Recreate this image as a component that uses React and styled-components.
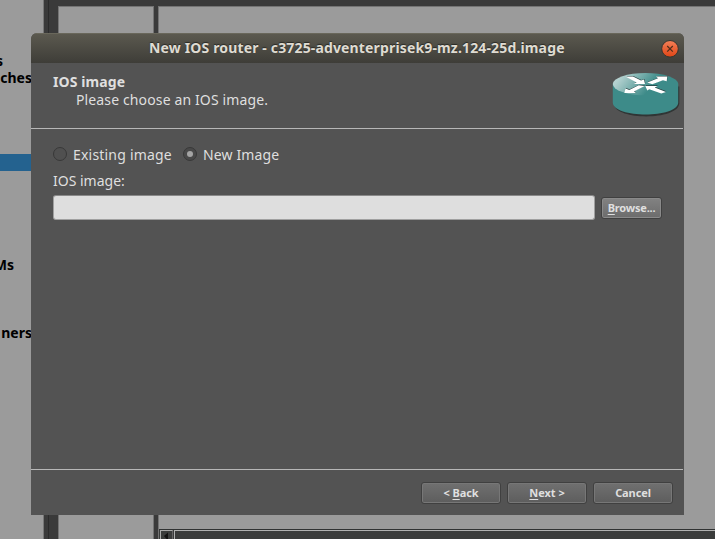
import React from 'react';
import styled, { createGlobalStyle } from 'styled-components';

const GlobalStyle = createGlobalStyle`
  * { box-sizing: border-box; }
  body { margin: 0; overflow: hidden; background: #3a3a3a; font-family: "Noto Sans", "Open Sans", sans-serif; }
`;

const Desktop = styled.div`
  position: relative;
  display: grid;
  grid-template-columns: 44px 14px 96px 4px 557px;
  width: 715px;
  height: 539px;
  background: #3a3a3a;
  overflow: hidden;
`;

const Sidebar = styled.div`
  display: flex;
  flex-direction: column;
  background: #9b9b9b;
  border-right: 1px solid #777;
  padding-top: 52px;
`;

const SideLabel = styled.div`
  width: 32px;
  height: 17px;
  margin-top: ${(p) => p.$gap || 0}px;
  display: flex;
  flex: none;
  justify-content: flex-end;
  padding-right: ${(p) => p.$right || 0}px;
  background: ${(p) => (p.$selected ? '#24628f' : 'transparent')};
  color: #000;
  font-size: 14px;
  font-weight: 700;
  line-height: 17px;
  white-space: nowrap;
`;

const Splitter = styled.div`
  margin-left: 4px;
  border-left: 1px solid #2b2b2b;
`;

const Pane = styled.div`
  margin-top: 6px;
  border: 1px solid #747474;
  border-bottom: 0;
  background: #9b9b9b;
`;

const CanvasPane = styled.div`
  display: flex;
  flex-direction: column;
  justify-content: flex-end;
  margin-top: 6px;
  border: 1px solid #747474;
  border-width: 1px 0 0 1px;
  background: #9b9b9b;
`;

const ScrollBar = styled.div`
  display: flex;
  gap: 1px;
  height: 10px;
  border-top: 1px solid #303232;
  background: #3a3c3b;
`;

const ScrollArrow = styled.div`
  width: 13px;
  overflow: hidden;
  border: 1px solid #a9aaa9;
  border-right-color: #666;
  border-bottom: 0;
  margin-left: 1px;
  svg { display: block; }
`;

const ScrollTrack = styled.div`
  flex: 1;
  border-top: 1px solid #b0b1b0;
  border-left: 1px solid #b0b1b0;
`;

const Dialog = styled.div`
  position: absolute;
  left: 31px;
  top: 33px;
  width: 653px;
  height: 482px;
  display: flex;
  flex-direction: column;
  border-radius: 6px 6px 0 0;
  background: #535353;
  color: #dfdfdf;
  overflow: hidden;
`;

const TitleBar = styled.div`
  display: flex;
  align-items: center;
  height: 30px;
  flex: none;
  padding: 0 5px 0 118px;
  background: linear-gradient(#5b594f, #3e3d38);
  border-top: 1px solid #69675b;
`;

const Text = styled.span`
  font-size: 14px;
  font-weight: ${(p) => (p.$bold ? 700 : 400)};
  letter-spacing: ${(p) => p.$track || 0}px;
  line-height: 18px;
  white-space: nowrap;
`;

const Title = styled(Text)`
  flex: 1;
  padding-bottom: 2px;
  color: #dfdbd2;
  text-shadow: 0 -1px 1px #292925;
`;

const CloseButton = styled.button`
  width: 18px;
  height: 18px;
  padding: 0;
  border: 0;
  background: none;
  svg { display: block; }
`;

const Header = styled.div`
  display: flex;
  justify-content: space-between;
  height: 66px;
  flex: none;
  margin-right: 1px;
  padding: 9px 3px 0 22px;
  border-bottom: 1px solid #b7b7b7;
`;

const HeaderText = styled.div`
  display: flex;
  flex-direction: column;
  padding-top: 1px;
`;

const Subtitle = styled(Text)`
  margin-left: 23px;
`;

const Body = styled.div`
  flex: 1;
  padding: 17px 22px 0;
`;

const RadioRow = styled.div`
  display: flex;
  height: 18px;
`;

const RadioOption = styled.label`
  display: flex;
  width: 130px;
  gap: 6px;
`;

const Radio = styled.span`
  display: grid;
  place-items: center;
  width: 14px;
  height: 14px;
  margin-top: 1px;
  border: 1px solid #383838;
  border-radius: 50%;
  background: ${(p) => (p.$checked ? '#494949' : '#505050')};
  &::after {
    content: '';
    width: 6px;
    height: 6px;
    border-radius: 50%;
    background: ${(p) => (p.$checked ? '#a5a5a5' : 'transparent')};
  }
`;

const FieldLabel = styled.div`
  display: flex;
  height: 18px;
  margin-top: 8px;
`;

const FieldRow = styled.div`
  display: flex;
  align-items: center;
  gap: 6px;
  margin-top: 5px;
`;

const Input = styled.input`
  width: 542px;
  height: 25px;
  border: 1px solid #a0a0a0;
  border-top-color: #898989;
  border-radius: 3px;
  background: #dedede;
`;

const Button = styled.button`
  width: ${(p) => p.$width}px;
  height: 22px;
  padding: 0;
  border: 1px solid #404040;
  border-radius: 3px;
  background: ${(p) => (p.$light ? 'linear-gradient(#828282, #6c6c6c)' : 'linear-gradient(#707070, #5d5d5d)')};
  box-shadow: inset 0 0 0 1px ${(p) => (p.$light ? '#8a8a8a' : '#777')};
  color: #dfdfdf;
  font: 700 11px/16px "Noto Sans", sans-serif;
  letter-spacing: ${(p) => p.$track || 0}px;
  white-space: nowrap;
`;

const Mnemonic = styled.span`
  text-decoration: underline;
  text-decoration-thickness: 1px;
  text-underline-offset: 2px;
  text-decoration-skip-ink: none;
`;

const Footer = styled.div`
  display: flex;
  justify-content: flex-end;
  gap: 6px;
  height: 46px;
  flex: none;
  margin-right: 1px;
  padding: 12px 10px 0 0;
  border-top: 1px solid #b7b7b7;
`;

function CloseIcon() {
  return (
    <svg width="18" height="18" viewBox="0 0 18 18">
      <defs>
        <linearGradient id="close" x1="0" y1="0" x2="0" y2="1">
          <stop offset="0" stopColor="#f48058" />
          <stop offset="1" stopColor="#df4516" />
        </linearGradient>
      </defs>
      <circle cx="9" cy="8.8" r="8.3" fill="url(#close)" stroke="#353630" />
      <path d="M6.2 6l5.6 5.6M11.8 6l-5.6 5.6" stroke="#4e2d1b" strokeWidth="1.2" />
    </svg>
  );
}

const ARROWS =
  'M13.3 4H21L29 8L32 7L33 11.3H21.5L24.7 10ZM35.3 10L46 5.7L44 4H55.3L54.7 8.7L51 7.7L40.3 11.7ZM13.5 16L17.3 17.3L26.7 12.7L32.7 13.3L22 19L24 20.5H12.3ZM33.3 13.3H45.7L42.7 15L54 19.3L49.3 21L37.3 16.7L35.3 18Z';

function RouterIcon() {
  return (
    <svg width="68" height="47" viewBox="0 -0.6 68 47">
      <defs>
        <linearGradient id="top" x1="0" y1="0.6" x2="0.55" y2="0.75">
          <stop offset="0" stopColor="#b4d1d0" />
          <stop offset="0.5" stopColor="#79afad" />
          <stop offset="1" stopColor="#3d8b89" />
        </linearGradient>
      </defs>
      <path d="M2 12V32C4 48 66 48 67.3 31V14Z" fill="#303535" />
      <path d="M.8 11V30C1 46 66 46 66.2 30V11Z" fill="#3d8b89" />
      <ellipse cx="33.5" cy="11.5" rx="32.7" ry="11.2" fill="url(#top)" />
      <path d={ARROWS} fill="#263f40" transform="translate(.4 -.6)" />
      <path d={ARROWS} fill="#fff" />
    </svg>
  );
}

export default function App() {
  return (
    <>
      <GlobalStyle />
      <Desktop>
        <Sidebar>
          <SideLabel $right={29}>s</SideLabel>
          <SideLabel>ches</SideLabel>
          <SideLabel $gap={68} $selected />
          <SideLabel $gap={85} $right={18}>Ms</SideLabel>
          <SideLabel $gap={51}>ners</SideLabel>
        </Sidebar>
        <Splitter />
        <Pane />
        <div />
        <CanvasPane>
          <ScrollBar>
            <ScrollArrow>
              <svg width="11" height="8" viewBox="0 0 11 8">
                <path d="M3 5l4-3.5v7H6Z" fill="#111" />
              </svg>
            </ScrollArrow>
            <ScrollTrack />
          </ScrollBar>
        </CanvasPane>

        <Dialog>
          <TitleBar>
            <Title $bold $track={0.15}>New IOS router - c3725-adventerprisek9-mz.124-25d.image</Title>
            <CloseButton aria-label="Close"><CloseIcon /></CloseButton>
          </TitleBar>
          <Header>
            <HeaderText>
              <Text $bold $track={0.1}>IOS image</Text>
              <Subtitle $track={0.13}>Please choose an IOS image.</Subtitle>
            </HeaderText>
            <RouterIcon />
          </Header>
          <Body>
            <RadioRow>
              <RadioOption><Radio /><Text $track={0.2}>Existing image</Text></RadioOption>
              <RadioOption><Radio $checked /><Text $track={0.12}>New Image</Text></RadioOption>
            </RadioRow>
            <FieldLabel><Text>IOS image:</Text></FieldLabel>
            <FieldRow>
              <Input />
              <Button $light $width={61} $track={-0.2}><Mnemonic>B</Mnemonic>rowse...</Button>
            </FieldRow>
          </Body>
          <Footer>
            <Button $width={80} $track={-0.1}>&lt; <Mnemonic>B</Mnemonic>ack</Button>
            <Button $width={80} $track={-0.05}><Mnemonic>N</Mnemonic>ext &gt;</Button>
            <Button $width={80} $track={-0.1}>Cancel</Button>
          </Footer>
        </Dialog>
      </Desktop>
    </>
  );
}
